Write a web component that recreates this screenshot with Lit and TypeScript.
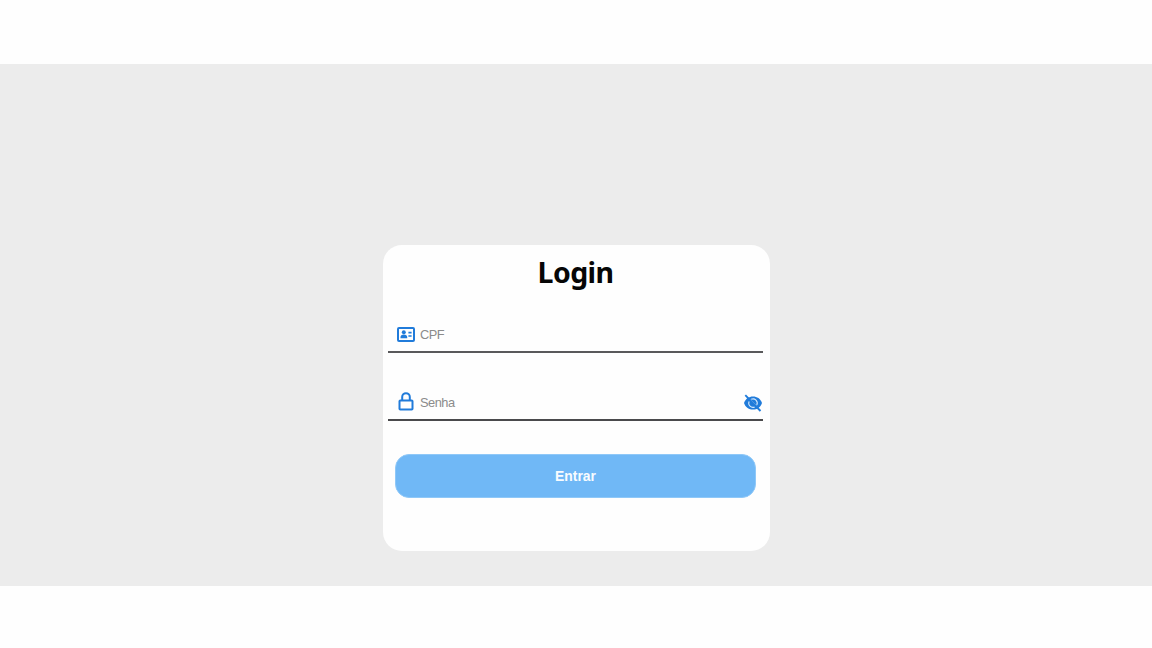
import { LitElement, html, css, svg } from "lit";
import { customElement } from "lit/decorators.js";

const idCard = svg`<svg class="icon" width="18" height="15" viewBox="0 0 18 15">
  <rect x="1" y="1" width="16" height="13" rx="1" fill="none" stroke="currentColor" stroke-width="2"/>
  <circle cx="6.800" cy="5.200" r="2" fill="currentColor"/>
  <path d="M3.500 11.200V10C3.500 8.500 4.800 7.500 6.800 7.500s3.400 1 3.400 2.500v1.200z" fill="currentColor"/>
  <path d="M11.400 5.600h3.200M11.400 9h3.200" stroke="currentColor" stroke-width="1.700"/>
</svg>`;

const lock = svg`<svg class="icon" width="18" height="20" viewBox="0 0 18 20">
  <rect x="2.500" y="8.500" width="13" height="9" rx=".8" fill="none" stroke="currentColor" stroke-width="2"/>
  <path d="M5.200 8.500V5a3.800 3.800 0 0 1 7.600 0V8.500" fill="none" stroke="currentColor" stroke-width="2"/>
</svg>`;

const eyeOff = svg`<svg class="icon eye" width="18" height="18" viewBox="0 0 18 18">
  <path d="M0 9C1.500 4.500 5 2.400 9 2.400S16.500 4.500 18 9c-1.500 4.500-5 6.600-9 6.600S1.500 13.500 0 9z" fill="currentColor"/>
  <path d="M7.200 5.300A4.200 4.200 0 0 1 12.800 10.900M5.100 7.400A4.200 4.200 0 0 0 10.700 12.900" fill="none" stroke="#d4e8fb" stroke-width="1.100"/>
  <path d="M6 5.200 12.700 12.100" stroke="#d4e8fb" stroke-width="1"/>
  <path d="M1.300 1.200 16.500 17" stroke="currentColor" stroke-width="1.900"/>
</svg>`;

@customElement("app-root")
export class AppRoot extends LitElement {
  static styles = css`
    :host {
      display: block;
      box-sizing: border-box;
      height: 648px;
      padding: 64px 0 62px;
      background: #fefefe;
      font-family: "Liberation Sans", Arial, sans-serif;
    }
    .stage {
      box-sizing: border-box;
      height: 522px;
      padding-top: 181px;
      background: #ececec;
    }
    .card {
      box-sizing: border-box;
      width: 387.5px;
      height: 306px;
      margin-left: 382.5px;
      padding: 7px 7px 0 5.5px;
      border-radius: 19px;
      background: #fefefe;
    }
    h1 {
      margin: 0;
      height: 40px;
      font: 700 28.5px/40px "Noto Sans", "Open Sans", sans-serif;
      letter-spacing: -0.6px;
      text-align: center;
      color: #060606;
    }
    .field {
      box-sizing: border-box;
      display: flex;
      align-items: center;
      height: 35px;
      margin-top: 26px;
      padding: 0 1px 1px 9px;
      border-bottom: 2px solid #59595b;
    }
    .field + .field {
      margin-top: 33px;
      border-bottom-color: #4a4a4c;
    }
    .icon {
      display: block;
      flex: none;
      color: #207bda;
    }
    .eye {
      margin-top: 2px;
    }
    input {
      flex: 1;
      min-width: 0;
      height: 30px;
      padding: 0;
      margin-left: 5px;
      border: 0;
      outline: 0;
      background: none;
      font: 12.8px "Liberation Sans", Arial, sans-serif;
      letter-spacing: -0.5px;
      color: #333;
    }
    input::placeholder {
      color: #8b8b8b;
      opacity: 1;
    }
    button {
      display: block;
      width: 361px;
      height: 43.5px;
      margin: 33px 0 0 7px;
      padding: 0;
      border: 1px solid #8fc8f8;
      border-radius: 14px;
      background: #70b8f6;
      color: #f8fcff;
      font: 700 13.9px "Liberation Sans", Arial, sans-serif;
    }
  `;

  render() {
    return html`<main class="stage">
      <form class="card">
        <h1>Login</h1>
        <label class="field">${idCard}<input placeholder="CPF" /></label>
        <label class="field">${lock}<input type="password" placeholder="Senha" />${eyeOff}</label>
        <button type="button">Entrar</button>
      </form>
    </main>`;
  }
}
